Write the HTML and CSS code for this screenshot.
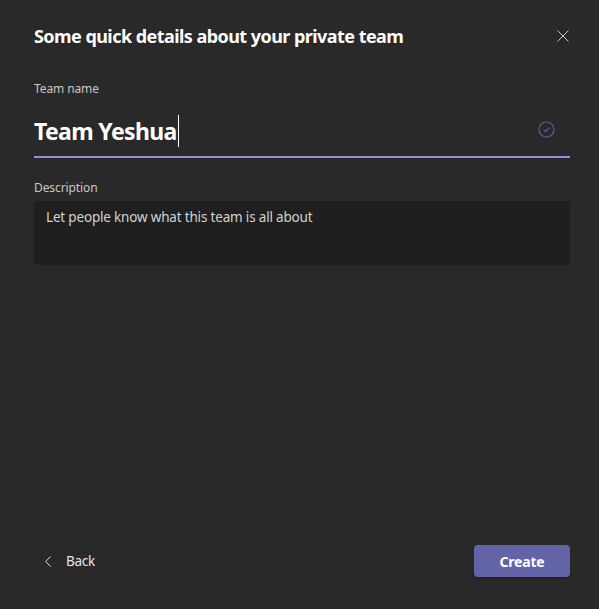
FILE: index.html
```html
<!DOCTYPE html>
<html lang="en">
<head>
<meta charset="utf-8">
<title>Create team</title>
<link rel="stylesheet" href="styles.css">
</head>
<body>
<div class="dialog">
  <div class="header">
    <h1 class="title">Some quick details about your private team</h1>
    <button class="close" aria-label="Close">
      <svg width="12" height="12" viewBox="0 0 12 12"><path d="M0.5 0.5 L11.5 11.5 M11.5 0.5 L0.5 11.5" stroke="#c8c8c8" stroke-width="1" fill="none"/></svg>
    </button>
  </div>

  <label class="label label-name">Team name</label>
  <div class="name-field">
    <span class="name-value">Team Yeshua</span><span class="caret"></span>
    <svg class="check" width="17" height="17" viewBox="0 0 17 17"><circle cx="8.5" cy="8.5" r="7.5" stroke="#5c5ea9" stroke-width="1.2" fill="none"/><path d="M5.6 8.8 L7.6 10.6 L11.4 6.6" stroke="#5c5ea9" stroke-width="1.2" fill="none"/></svg>
  </div>

  <label class="label label-desc">Description</label>
  <div class="desc-box">Let people know what this team is all about</div>

  <div class="footer">
    <button class="back">
      <svg width="6" height="11" viewBox="0 0 6 11"><path d="M5.5 0.5 L0.7 5.5 L5.5 10.5" stroke="#e0e0e0" stroke-width="1" fill="none"/></svg>
      <span>Back</span>
    </button>
    <button class="create">Create</button>
  </div>
</div>
</body>
</html>
```

FILE: styles.css
```css
* { box-sizing: border-box; }
html, body {
  margin: 0;
  padding: 0;
  background: #292929;
}
body {
  font-family: "Noto Sans", "Open Sans", sans-serif;
  color: #ffffff;
}
.dialog {
  width: 599px;
  height: 609px;
  display: flex;
  flex-direction: column;
  padding: 24px 29px 32px 34px;
  background: #292929;
  box-shadow: inset 1px 0 0 #242424;
}
.header {
  display: flex;
  align-items: center;
  justify-content: space-between;
  height: 24px;
}
.title {
  margin: 0;
  font-size: 18px;
  line-height: 24px;
  font-weight: 700;
  color: #ffffff;
  letter-spacing: -0.55px;
}
.close {
  background: none;
  border: none;
  padding: 0;
  margin-right: 1px;
  display: flex;
}
.label {
  display: block;
  font-size: 12px;
  line-height: 16px;
  color: #c8c8c8;
  letter-spacing: -0.1px;
}
.label-name { margin-top: 33px; }
.name-field {
  margin-top: 18px;
  display: flex;
  align-items: center;
  padding-bottom: 9px;
  border-bottom: 2px solid #8f91de;
  height: 43px;
}
.name-value {
  font-size: 23px;
  line-height: 32px;
  font-weight: 700;
  color: #ffffff;
  letter-spacing: -0.65px;
}
.caret {
  width: 1px;
  height: 32px;
  background: #ffffff;
  margin-left: 1px;
}
.check {
  margin-left: auto;
  margin-right: 15px;
  margin-top: -3px;
}
.label-desc { margin-top: 22px; }
.desc-box {
  margin-top: 5px;
  height: 64px;
  background: #1f1f1f;
  border-radius: 3px;
  padding: 6px 12px;
  font-size: 13.5px;
  line-height: 20px;
  color: #d2d2d2;
  letter-spacing: -0.18px;
}
.footer {
  margin-top: auto;
  display: flex;
  align-items: center;
  justify-content: space-between;
}
.back {
  display: flex;
  align-items: center;
  gap: 15px;
  background: none;
  border: none;
  padding: 0 0 0 11px;
  font-family: inherit;
  font-size: 13.5px;
  letter-spacing: -0.3px;
  color: #e6e6e6;
}
.create {
  width: 96px;
  height: 32px;
  background: #6264a7;
  border: none;
  border-radius: 4px;
  font-family: inherit;
  font-size: 14px;
  font-weight: 700;
  letter-spacing: -0.2px;
  color: #ffffff;
  box-shadow: 0 1px 2px rgba(0,0,0,0.3);
}
```
